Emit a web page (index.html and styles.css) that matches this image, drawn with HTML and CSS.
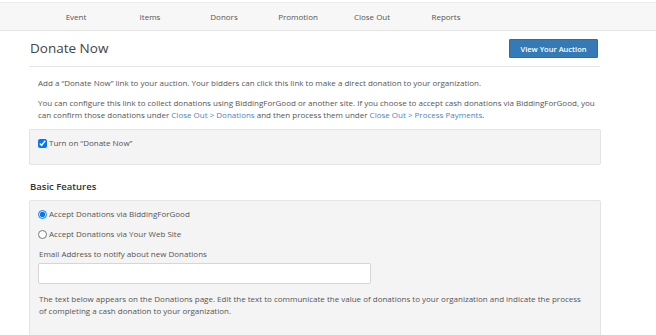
FILE: index.html
```html
<!DOCTYPE html>
<html lang="en">
<head>
  <meta charset="UTF-8">
  <title>Donate Now</title>
  <link rel="stylesheet" href="styles.css">
</head>
<body>
  <!-- Top navigation -->
  <nav class="topnav">
    <ul>
      <li><a href="#">Event</a></li>
      <li><a href="#">Items</a></li>
      <li><a href="#">Donors</a></li>
      <li><a href="#">Promotion</a></li>
      <li><a href="#">Close Out</a></li>
      <li><a href="#">Reports</a></li>
    </ul>
  </nav>

  <div class="page">
    <div class="page-header">
      <h1>Donate Now</h1>
      <button class="primary-button">View Your Auction</button>
    </div>

    <div class="intro">
      <p>Add a “Donate Now” link to your auction. Your bidders can click this link to make a direct donation to your organization.</p>
      <p>You can configure this link to collect donations using BiddingForGood or another site. If you choose to accept cash donations via BiddingForGood, you can confirm those donations under <a href="#">Close Out &gt; Donations</a> and then process them under <a href="#">Close Out &gt; Process Payments</a>.</p>
    </div>

    <div class="panel toggle-panel">
      <label class="check"><input type="checkbox" checked> Turn on “Donate Now”</label>
    </div>

    <h2>Basic Features</h2>

    <div class="panel features">
      <label class="check"><input type="radio" name="via" checked> Accept Donations via BiddingForGood</label>
      <label class="check"><input type="radio" name="via"> Accept Donations via Your Web Site</label>
      <label class="field-label" for="notifyEmail">Email Address to notify about new Donations</label>
      <input type="text" id="notifyEmail" class="text-input">
      <p>The text below appears on the Donations page. Edit the text to communicate the value of donations to your organization and indicate the process of completing a cash donation to your organization.</p>
    </div>
  </div>
</body>
</html>
```

FILE: styles.css
```css
* {
  box-sizing: border-box;
  font-family: 'Open Sans', sans-serif;
}

body {
  margin: 0;
  background-color: #fff;
  color: #555;
  font-size: 8px;
  line-height: 12px;
}

a {
  color: #4a86c5;
  text-decoration: none;
}

/* Top navigation */
.topnav {
  margin-top: 2px;
  height: 29px;
  background-color: #f7f7f7;
  border-top: 1px solid #ededed;
  border-bottom: 1px solid #e4e4e4;
}

.topnav ul {
  list-style: none;
  margin: 0;
  padding: 0 0 0 39px;
  display: flex;
}

.topnav li {
  width: 74px;
  text-align: center;
}

.topnav a {
  color: #555;
  line-height: 27px;
}

/* Page */
.page {
  width: 572px;
  margin-left: 29px;
}

.page-header {
  display: flex;
  justify-content: space-between;
  align-items: center;
  padding: 8px 2px 8px 1px;
  border-bottom: 1px solid #e5e5e5;
  margin-right: 1px;
}

h1 {
  margin: 0;
  font-size: 13.5px;
  font-weight: 400;
  color: #444;
  line-height: 19px;
}

.primary-button {
  width: 89px;
  height: 19px;
  padding: 0;
  border: 1px solid #2e6da4;
  border-radius: 1px;
  background-color: #337ab7;
  color: #fff;
  font-size: 7.5px;
  font-weight: 600;
  cursor: pointer;
}

.intro {
  padding: 10px 0 0 9px;
}

p {
  margin: 0 0 8px;
}

.panel {
  background-color: #f4f4f4;
  border: 1px solid #e4e4e4;
  border-radius: 2px;
}

.toggle-panel {
  padding: 7px 8px 15px 8px;
}

.check {
  display: flex;
  align-items: center;
  gap: 2px;
  height: 12px;
}

.check input {
  width: 9px;
  height: 9px;
  margin: 0;
}

h2 {
  margin: 15px 0 6px 1px;
  font-size: 9.5px;
  font-weight: 600;
  color: #333;
  line-height: 14px;
}

.features {
  padding: 7px 12px 20px 8px;
}

.features .check {
  margin-bottom: 8px;
}

.field-label {
  display: block;
  margin: 0 0 3px 1px;
}

.text-input {
  display: block;
  width: 333px;
  height: 21px;
  margin: 0 0 9px;
  border: 1px solid #d6d6d6;
  border-radius: 2px;
  background-color: #fff;
}

.features p {
  margin-left: 1px;
}
```
